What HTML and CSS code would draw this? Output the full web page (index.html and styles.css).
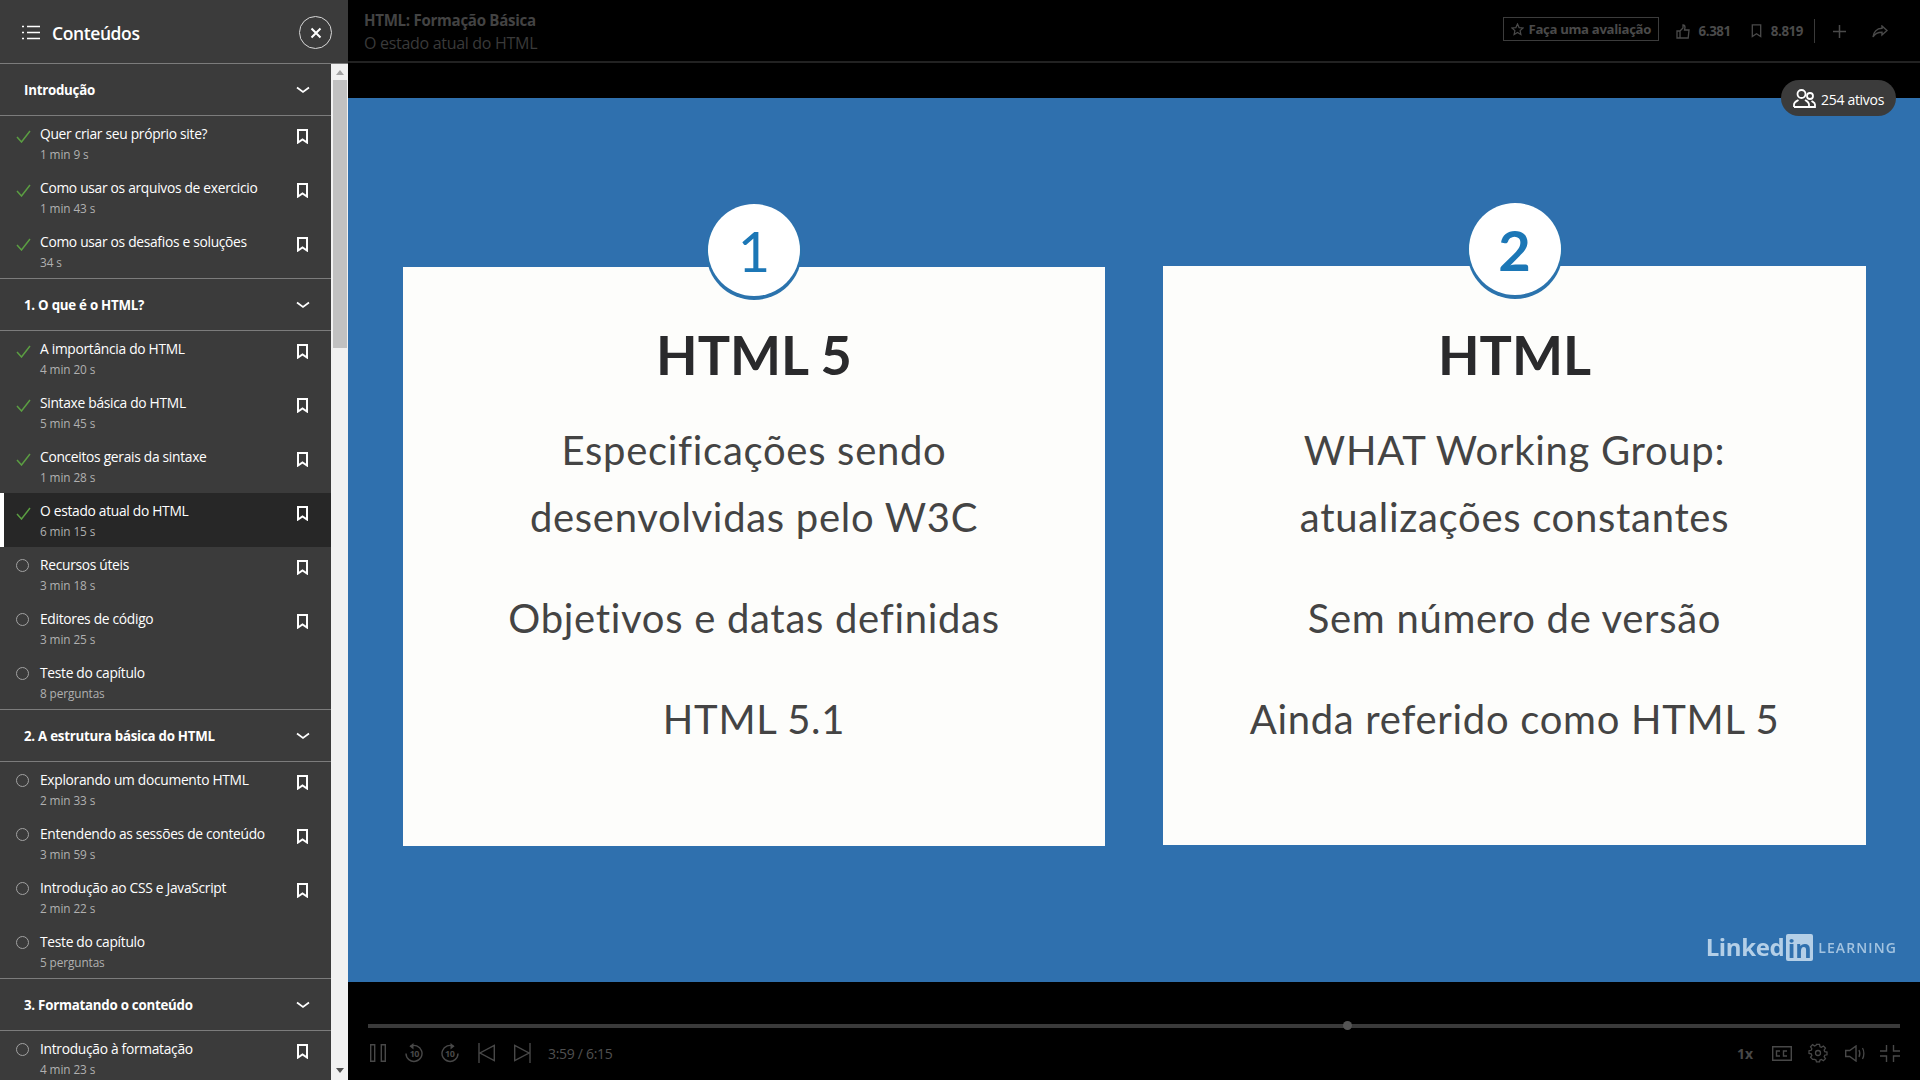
FILE: index.html
```html
<!DOCTYPE html>
<html>
<head>
    <title>HTML: Formação Básica</title>
    <link rel="stylesheet" href="styles.css">
</head>
<body>
    <svg class="defs" width="0" height="0">
        <symbol id="i-check" viewBox="0 0 15 13"><path d="M1 7l4.5 5L14 1" fill="none" stroke="#5b9e42" stroke-width="1.5"/></symbol>
        <symbol id="i-mark" viewBox="0 0 11 15"><path d="M1 1h9v12.5l-4.5-3-4.5 3z" fill="none" stroke="currentColor" stroke-width="2"/></symbol>
        <symbol id="i-chev" viewBox="0 0 14 8"><path d="M1 1.5l6 4.5 6-4.5" fill="none" stroke="#fff" stroke-width="1.7"/></symbol>
    </svg>

    <aside class="sidebar">
        <header class="side-head">
            <svg class="list-icon" width="18" height="15" viewBox="0 0 18 15"><path d="M0 1.5h2M0 7.5h2M0 13.5h2M5 1.5h13M5 7.5h13M5 13.5h13" stroke="#fff" stroke-width="1.6"/></svg>
            <span class="side-title">Conteúdos</span>
            <button class="close-btn"><svg width="12" height="12" viewBox="0 0 12 12"><path d="M1.5 1.5l9 9M10.5 1.5l-9 9" stroke="#fff" stroke-width="2"/></svg></button>
        </header>
        <div class="side-body">
            <div class="toc">
                <section class="chapter">
                    <div class="chapter-head"><span>Introdução</span><svg class="chev"><use href="#i-chev"/></svg></div>
                    <div class="item"><svg class="check"><use href="#i-check"/></svg><div class="item-text"><div class="item-title">Quer criar seu próprio site?</div><div class="item-meta">1 min 9 s</div></div><svg class="mark"><use href="#i-mark"/></svg></div>
                    <div class="item"><svg class="check"><use href="#i-check"/></svg><div class="item-text"><div class="item-title">Como usar os arquivos de exercicio</div><div class="item-meta">1 min 43 s</div></div><svg class="mark"><use href="#i-mark"/></svg></div>
                    <div class="item"><svg class="check"><use href="#i-check"/></svg><div class="item-text"><div class="item-title">Como usar os desafios e soluções</div><div class="item-meta">34 s</div></div><svg class="mark"><use href="#i-mark"/></svg></div>
                </section>
                <section class="chapter">
                    <div class="chapter-head"><span>1. O que é o HTML?</span><svg class="chev"><use href="#i-chev"/></svg></div>
                    <div class="item"><svg class="check"><use href="#i-check"/></svg><div class="item-text"><div class="item-title">A importância do HTML</div><div class="item-meta">4 min 20 s</div></div><svg class="mark"><use href="#i-mark"/></svg></div>
                    <div class="item"><svg class="check"><use href="#i-check"/></svg><div class="item-text"><div class="item-title">Sintaxe básica do HTML</div><div class="item-meta">5 min 45 s</div></div><svg class="mark"><use href="#i-mark"/></svg></div>
                    <div class="item"><svg class="check"><use href="#i-check"/></svg><div class="item-text"><div class="item-title">Conceitos gerais da sintaxe</div><div class="item-meta">1 min 28 s</div></div><svg class="mark"><use href="#i-mark"/></svg></div>
                    <div class="item active"><svg class="check"><use href="#i-check"/></svg><div class="item-text"><div class="item-title">O estado atual do HTML</div><div class="item-meta">6 min 15 s</div></div><svg class="mark"><use href="#i-mark"/></svg></div>
                    <div class="item"><span class="dot"></span><div class="item-text"><div class="item-title">Recursos úteis</div><div class="item-meta">3 min 18 s</div></div><svg class="mark"><use href="#i-mark"/></svg></div>
                    <div class="item"><span class="dot"></span><div class="item-text"><div class="item-title">Editores de código</div><div class="item-meta">3 min 25 s</div></div><svg class="mark"><use href="#i-mark"/></svg></div>
                    <div class="item"><span class="dot"></span><div class="item-text"><div class="item-title">Teste do capítulo</div><div class="item-meta">8 perguntas</div></div></div>
                </section>
                <section class="chapter">
                    <div class="chapter-head"><span>2. A estrutura básica do HTML</span><svg class="chev"><use href="#i-chev"/></svg></div>
                    <div class="item"><span class="dot"></span><div class="item-text"><div class="item-title">Explorando um documento HTML</div><div class="item-meta">2 min 33 s</div></div><svg class="mark"><use href="#i-mark"/></svg></div>
                    <div class="item"><span class="dot"></span><div class="item-text"><div class="item-title">Entendendo as sessões de conteúdo</div><div class="item-meta">3 min 59 s</div></div><svg class="mark"><use href="#i-mark"/></svg></div>
                    <div class="item"><span class="dot"></span><div class="item-text"><div class="item-title">Introdução ao CSS e JavaScript</div><div class="item-meta">2 min 22 s</div></div><svg class="mark"><use href="#i-mark"/></svg></div>
                    <div class="item"><span class="dot"></span><div class="item-text"><div class="item-title">Teste do capítulo</div><div class="item-meta">5 perguntas</div></div></div>
                </section>
                <section class="chapter">
                    <div class="chapter-head"><span>3. Formatando o conteúdo</span><svg class="chev"><use href="#i-chev"/></svg></div>
                    <div class="item"><span class="dot"></span><div class="item-text"><div class="item-title">Introdução à formatação</div><div class="item-meta">4 min 23 s</div></div><svg class="mark"><use href="#i-mark"/></svg></div>
                </section>
            </div>
            <div class="scrollbar">
                <span class="arrow-up"></span>
                <div class="thumb"></div>
                <span class="arrow-down"></span>
            </div>
        </div>
    </aside>

    <main class="player">
        <header class="topbar">
            <div class="course">
                <div class="course-name">HTML: Formação Básica</div>
                <div class="course-video">O estado atual do HTML</div>
            </div>
            <div class="top-actions">
                <button class="rate-btn">
                    <svg width="13" height="13" viewBox="0 0 13 13"><path d="M6.5 1l1.6 3.6 3.9.4-2.9 2.6.8 3.9-3.4-2-3.4 2 .8-3.9L1 5l3.9-.4z" fill="none" stroke="#4a4a4a" stroke-width="1.2"/></svg>
                    Faça uma avaliação
                </button>
                <svg class="thumb-icon" width="14" height="15" viewBox="0 0 14 15"><path d="M1 7h3v7H1zM4 7l3-3V1c1.500 0 2 1 2 2.500L8.500 6H13l-.8 8H4" fill="none" stroke="#4a4a4a" stroke-width="1.3"/></svg>
                <span class="count count-likes">6.381</span>
                <svg class="count-mark" width="11" height="14" viewBox="0 0 11 15"><path d="M1 1h9v12.500l-4.500-3-4.500 3z" fill="none" stroke="#4a4a4a" stroke-width="1.400"/></svg>
                <span class="count">8.819</span>
                <span class="divider"></span>
                <svg class="plus" width="13" height="13" viewBox="0 0 13 13"><path d="M6.500 0v13M0 6.500h13" stroke="#4a4a4a" stroke-width="1.500"/></svg>
                <svg class="share" width="16" height="13" viewBox="0 0 16 13"><path d="M10 1l5 4.500L10 10V7.300C6 7.300 3 8.500 1 12c.5-4.500 3.500-8.500 9-8.700z" fill="none" stroke="#4a4a4a" stroke-width="1.400"/></svg>
            </div>
        </header>

        <div class="stage">
            <div class="slide">
                <div class="card">
                    <div class="badge badge-thin">1</div>
                    <h2 class="card-title">HTML 5</h2>
                    <p class="card-line">Especificações sendo<br>desenvolvidas pelo W3C</p>
                    <p class="card-line">Objetivos e datas definidas</p>
                    <p class="card-line">HTML 5.1</p>
                </div>
                <div class="card card-second">
                    <div class="badge">2</div>
                    <h2 class="card-title">HTML</h2>
                    <p class="card-line">WHAT Working Group:<br>atualizações constantes</p>
                    <p class="card-line">Sem número de versão</p>
                    <p class="card-line">Ainda referido como HTML 5</p>
                </div>
                <div class="brand">
                    <span class="brand-word">Linked</span><span class="brand-in">in</span><span class="brand-sub">LEARNING</span>
                </div>
            </div>
            <div class="active-pill">
                <svg width="23" height="19" viewBox="0 0 23 19"><g fill="none" stroke="#fff" stroke-width="1.800"><circle cx="8.500" cy="5" r="4"/><path d="M1 18v-2.500c0-2.500 3-3.500 4.500-4.500M12 11c1.500 1 4 2 4 4.500V18H1"/><circle cx="17" cy="7" r="3"/><path d="M16 18h6v-2.500c0-2-2-2.500-3.500-3.500"/></g></svg>
                <span class="pill-text">254 ativos</span>
            </div>
        </div>

        <footer class="controls">
            <div class="progress"><span class="knob"></span></div>
            <div class="control-row">
                <svg class="ctl pause" width="16" height="18" viewBox="0 0 16 18"><path d="M.7.7h4v16.600h-4zM11.300.7h4v16.600h-4z" fill="none" stroke="#484848" stroke-width="1.400"/></svg>
                <svg class="ctl skip" width="18" height="20" viewBox="0 0 18 20"><path d="M5 3.500A8 8 0 1 1 1 10.500" fill="none" stroke="#484848" stroke-width="1.400"/><path d="M8.500 0v6.500L4.500 3.300z" fill="#484848"/><text x="9.300" y="14" class="skip-num">10</text></svg>
                <svg class="ctl skip" width="18" height="20" viewBox="0 0 18 20"><path d="M13 3.500A8 8 0 1 0 17 10.500" fill="none" stroke="#484848" stroke-width="1.400"/><path d="M9.500 0v6.500L13.500 3.300z" fill="#484848"/><text x="8.700" y="14" class="skip-num">10</text></svg>
                <svg class="ctl prev" width="17" height="20" viewBox="0 0 17 20"><path d="M1 0v20M16.300 2.500v15L2 10z" fill="none" stroke="#484848" stroke-width="1.400"/></svg>
                <svg class="ctl next" width="17" height="20" viewBox="0 0 17 20"><path d="M16 0v20M.7 2.500v15L15 10z" fill="none" stroke="#484848" stroke-width="1.400"/></svg>
                <span class="time">3:59 / 6:15</span>
                <span class="spacer"></span>
                <span class="speed">1x</span>
                <svg class="ctl cc" width="20" height="15" viewBox="0 0 20 15"><path d="M.7.7h18.600v13.600H.7z" fill="none" stroke="#484848" stroke-width="1.400"/><path d="M8 5H4.500v5H8M15 5h-3.500v5H15" fill="none" stroke="#484848" stroke-width="1.400"/></svg>
                <svg class="ctl gear" width="20" height="20" viewBox="0 0 20 20"><path d="M8.300 1h3.400l.5 2.600 1.600.7 2.200-1.500 2.300 2.400-1.500 2.100.7 1.700 2.500.5v3l-2.500.5-.7 1.700 1.500 2.100-2.300 2.400-2.200-1.500-1.600.7-.5 2.100H8.300l-.5-2.100-1.600-.7L4 17.700l-2.300-2.400 1.500-2.100-.7-1.700L0 11V8l2.500-.5.700-1.700-1.500-2.100L4 1.300l2.200 1.500 1.600-.7z" transform="translate(1 .5) scale(.9)" fill="none" stroke="#484848" stroke-width="1.400"/><circle cx="10" cy="10" r="2.500" fill="none" stroke="#484848" stroke-width="1.300"/></svg>
                <svg class="ctl volume" width="21" height="17" viewBox="0 0 21 17"><path d="M.7 5.500h4L11 1v15L4.700 11.500h-4z" fill="none" stroke="#484848" stroke-width="1.400"/><path d="M14 5c1 2 1 5 0 7M17.500 3c1.800 3 1.800 8 0 11" fill="none" stroke="#484848" stroke-width="1.300"/></svg>
                <svg class="ctl shrink" width="20" height="17" viewBox="0 0 20 17"><path d="M6.500 0v6H0M13.500 0v6H20M6.500 17v-6H0M13.500 17v-6H20" fill="none" stroke="#484848" stroke-width="1.400"/></svg>
            </div>
        </footer>
    </main>
</body>
</html>
```

FILE: styles.css
```css
* {
    box-sizing: border-box;
}
html, body {
    height: 100%;
}
body {
    margin: 0;
    height: 1080px;
    overflow: hidden;
    display: flex;
    background-color: #000;
    font-family: "Open Sans", "Liberation Sans", sans-serif;
    color: #fff;
}
.defs {
    position: absolute;
}

/* sidebar */
.sidebar {
    width: 348px;
    flex: none;
    display: flex;
    flex-direction: column;
    background-color: #3b3b3b;
}
.side-head {
    height: 64px;
    flex: none;
    display: flex;
    align-items: center;
    padding: 2px 16px 0 22px;
    border-bottom: 1px solid #7c7c7c;
}
.side-title {
    margin-left: 12px;
    flex: 1;
    font-size: 17.5px;
    font-weight: 600;
    letter-spacing: -0.4px;
}
.close-btn {
    width: 33px;
    height: 33px;
    padding: 0;
    display: flex;
    align-items: center;
    justify-content: center;
    background: none;
    border: 1px solid #d8d8d8;
    border-radius: 50%;
}
.side-body {
    flex: 1;
    display: flex;
    min-height: 0;
}
.toc {
    width: 331px;
    overflow: hidden;
}
.chapter {
    border-bottom: 1px solid #7c7c7c;
}
.chapter-head {
    height: 52px;
    display: flex;
    align-items: center;
    justify-content: space-between;
    padding: 0 21px 0 24px;
    border-bottom: 1px solid #7c7c7c;
    font-size: 13.3px;
    font-weight: 700;
    letter-spacing: -0.25px;
}
.chev {
    width: 14px;
    height: 8px;
}
.item {
    position: relative;
    height: 54px;
    display: flex;
    padding: 8px 23px 0 16px;
}
.item.active {
    background-color: #272727;
    border-left: 4px solid #fff;
    padding-left: 12px;
}
.check {
    width: 15px;
    height: 13px;
    margin: 6px 9px 0 0;
    flex: none;
}
.dot {
    width: 13px;
    height: 13px;
    margin: 4px 11px 0 0;
    flex: none;
    border: 1.5px solid #a2a2a2;
    border-radius: 50%;
}
.item-text {
    flex: 1;
    min-width: 0;
}
.item-title {
    font-size: 13.8px;
    line-height: 20px;
    letter-spacing: -0.3px;
    white-space: nowrap;
}
.item-meta {
    font-size: 11.8px;
    line-height: 21px;
    letter-spacing: -0.1px;
    color: #b0b0b0;
}
.mark {
    width: 11px;
    height: 15px;
    margin-top: 5px;
    flex: none;
    color: #fff;
}

/* scrollbar */
.scrollbar {
    width: 17px;
    flex: none;
    display: flex;
    flex-direction: column;
    align-items: center;
    background-color: #f1f1f1;
}
.thumb {
    width: 14px;
    height: 268px;
    margin: 5px 0 auto;
    background-color: #c1c1c1;
}
.arrow-up, .arrow-down {
    width: 0;
    height: 0;
    margin-top: 6px;
    border-left: 4px solid transparent;
    border-right: 4px solid transparent;
    border-bottom: 5px solid #a3a3a3;
}
.arrow-down {
    margin: 0 0 7px;
    border-bottom: none;
    border-top: 5px solid #505050;
}

/* player */
.player {
    flex: 1;
    min-width: 0;
    display: flex;
    flex-direction: column;
}
.topbar {
    height: 63px;
    flex: none;
    display: flex;
    align-items: flex-start;
    justify-content: space-between;
    border-bottom: 2px solid #222;
    padding: 10px 32px 0 16px;
}
.course-name {
    font-size: 15.1px;
    line-height: 21px;
    font-weight: 700;
    letter-spacing: -0.3px;
    color: #434343;
}
.course-video {
    margin-top: 2px;
    font-size: 16px;
    line-height: 21px;
    letter-spacing: -0.3px;
    color: #3a3a3a;
}
.top-actions {
    display: flex;
    align-items: center;
    margin-top: 8px;
    height: 26px;
    color: #4a4a4a;
}
.rate-btn {
    width: 156px;
    height: 24px;
    margin-top: -4px;
    padding: 0 0 0 7px;
    display: flex;
    align-items: center;
    gap: 5px;
    background: none;
    border: 1px solid #3c3c3c;
    font-family: inherit;
    font-size: 13.2px;
    font-weight: 700;
    letter-spacing: -0.35px;
    color: #4a4a4a;
}
.thumb-icon {
    margin-left: 17px;
}
.count {
    margin-left: 9px;
    font-size: 13.3px;
    font-weight: 700;
    letter-spacing: -0.4px;
}
.count-mark {
    margin-left: 20px;
}
.divider {
    width: 1px;
    height: 24px;
    margin: 0 18px 0 11px;
    background-color: #3a3a3a;
}
.share {
    margin-left: 26px;
}

/* video */
.stage {
    position: relative;
    flex: 1;
    min-height: 0;
    padding-top: 35px;
}
.slide {
    position: relative;
    height: 884px;
    padding: 169px 54px 0 55px;
    display: grid;
    grid-template-columns: 702px 703px;
    column-gap: 58px;
    background-color: #2f70ae;
}
.card {
    height: 579px;
    display: flex;
    flex-direction: column;
    align-items: center;
    background-color: #fdfdfb;
    color: #444;
    font-family: Lato, "Open Sans", sans-serif;
}
.card-second {
    margin-top: -1px;
}
.card-second .card-title {
    margin-top: 28px;
}
.badge {
    width: 92px;
    height: 92px;
    margin-top: -63px;
    flex: none;
    display: flex;
    align-items: center;
    justify-content: center;
    background-color: #fff;
    border-radius: 50%;
    box-shadow: 0 2px 0 2px #2b73ad;
    font-size: 56px;
    font-weight: 700;
    color: #1c77b6;
}
.badge-thin {
    font-weight: 400;
}
.card-title {
    margin: 27px 0 0;
    font-size: 54px;
    line-height: 64px;
    font-weight: 700;
    color: #2a2a2c;
}
.card-line {
    margin: 30px 0 0;
    font-size: 40px;
    line-height: 67px;
    letter-spacing: 0.7px;
    text-align: center;
}
.card-line + .card-line {
    margin-top: 34px;
}
.brand {
    position: absolute;
    right: 23px;
    bottom: 21px;
    display: flex;
    align-items: center;
    color: #b4cfe7;
    filter: blur(0.7px);
    font-family: "Open Sans", sans-serif;
}
.brand-word {
    font-size: 24px;
    font-weight: 700;
    line-height: 28px;
    letter-spacing: -0.4px;
}
.brand-in {
    width: 27px;
    height: 27px;
    margin-left: 2px;
    background-color: #b4cfe7;
    border-radius: 2px;
    color: #2f70ae;
    font-size: 25px;
    font-weight: 700;
    line-height: 28px;
    text-align: center;
}
.brand-sub {
    margin-left: 5px;
    font-size: 14px;
    font-weight: 600;
    letter-spacing: 1.1px;
    color: #a3c3e0;
}
.active-pill {
    position: absolute;
    top: 17px;
    right: 24px;
    width: 115px;
    height: 36px;
    display: flex;
    align-items: center;
    gap: 5px;
    padding-left: 12px;
    background-color: #3b3b3b;
    border-radius: 18px;
    font-size: 14px;
    letter-spacing: -0.3px;
}
.pill-text {
    padding-top: 2px;
}

/* controls */
.controls {
    height: 98px;
    flex: none;
    padding: 42px 20px 0;
}
.progress {
    position: relative;
    height: 4px;
    background-color: #3a3a3a;
}
.knob {
    position: absolute;
    left: 975px;
    top: -3px;
    width: 9px;
    height: 9px;
    background-color: #555;
    border-radius: 50%;
}
.control-row {
    display: flex;
    align-items: center;
    height: 20px;
    margin-top: 15px;
    padding-left: 2px;
}
.ctl {
    flex: none;
}
.skip {
    margin-left: 19px;
}
.skip + .skip {
    margin-left: 18px;
}
.skip-num {
    font-size: 9px;
    font-weight: 700;
    fill: #484848;
    text-anchor: middle;
    letter-spacing: -0.5px;
}
.prev {
    margin-left: 19px;
}
.next {
    margin-left: 19px;
}
.time {
    margin-left: 17px;
    font-size: 14px;
    letter-spacing: -0.3px;
    color: #505050;
}
.spacer {
    flex: 1;
}
.speed {
    margin-right: 19px;
    font-size: 14px;
    font-weight: 700;
    color: #484848;
}
.gear {
    margin-left: 16px;
}
.volume {
    margin-left: 17px;
}
.shrink {
    margin-left: 14px;
}
```
